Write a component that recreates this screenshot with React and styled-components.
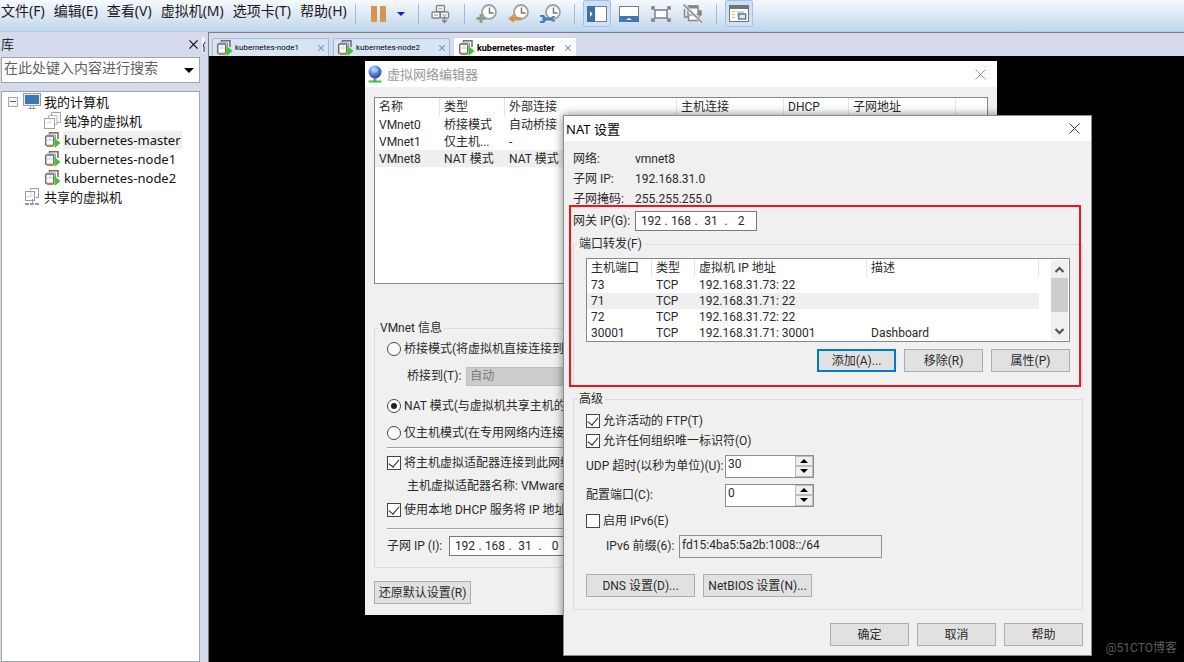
import React from "react";
import styled, { createGlobalStyle } from "styled-components";

const GlobalStyle = createGlobalStyle`
  * {
    box-sizing: border-box;
  }
  body {
    margin: 0;
    background: #d5dbed;
    color: #2a2a2a;
    font-family: Roboto, "Noto Sans CJK SC", sans-serif;
    font-size: 12px;
    line-height: 16px;
  }
  button,
  input,
  select {
    font: inherit;
    color: inherit;
    margin: 0;
  }
`;

// ---------- data ----------

const menus = ["文件(F)", "编辑(E)", "查看(V)", "虚拟机(M)", "选项卡(T)", "帮助(H)"];

const tabs = [
  { name: "kubernetes-node1", width: 117 },
  { name: "kubernetes-node2", width: 117 },
  { name: "kubernetes-master", width: 122, active: true },
];

const networks = [
  ["VMnet0", "桥接模式", "自动桥接"],
  ["VMnet1", "仅主机...", "-"],
  ["VMnet8", "NAT 模式", "NAT 模式"],
];

const forwards = [
  ["73", "TCP", "192.168.31.73: 22", ""],
  ["71", "TCP", "192.168.31.71: 22", ""],
  ["72", "TCP", "192.168.31.72: 22", ""],
  ["30001", "TCP", "192.168.31.71: 30001", "Dashboard"],
];

// ---------- icons ----------

// Stacked sheets for a stopped machine, darker cards with a play mark for a running one
const VmIcon = ({ running }) =>
  running ? (
    <svg width="17" height="17" viewBox="0 0 17 17" fill="none">
      <path d="M5.500 3V1.700h8.500V8" stroke="#6f6f6f" strokeWidth="1.500" />
      <path d="M3 4h8.500v4" stroke="#9a9a9a" />
      <rect x="1.700" y="5" width="8" height="9.500" rx="1" fill="#fff" stroke="#6f6f6f" strokeWidth="1.500" />
      <path d="M6 6v4M3 9h6" stroke="#bcd3ec" />
      <path d="M3 15h6.500" stroke="#b0894f" strokeWidth="2" />
      <path d="M10.500 7v10l6-5z" fill="#45c12f" />
    </svg>
  ) : (
    <svg width="17" height="17" viewBox="0 0 17 17" fill="none" stroke="#a3a3a3">
      <path d="M7.500 4V0.500h9v10h-4" />
      <path d="M4.500 6V3.500h8.500v9h-2" stroke="#b8b8b8" />
      <rect x="0.500" y="6.500" width="10" height="10" fill="#fff" />
      <path d="M6 7v4M2 10.500h6" stroke="#cfe0f2" />
    </svg>
  );

const SharedIcon = () => (
  <svg width="17" height="19" viewBox="0 0 17 19" fill="none" stroke="#9b9b9b">
    <path d="M6.500 3.500v-2h8v9h-3" />
    <rect x="1.500" y="4.500" width="9" height="9" fill="#fff" />
    <path d="M7 5v4h4M3 9.500h4" stroke="#c9dcf0" />
    <path d="M8.500 12v4" />
    <path d="M1 17h4M6 17h4M11 17h4" strokeWidth="2" />
  </svg>
);

const MonitorIcon = () => (
  <svg width="18" height="17" viewBox="0 0 18 17">
    <rect x="0.500" y="0.500" width="17" height="12" fill="#e9e9e9" stroke="#9c9c9c" />
    <rect x="2" y="2" width="14" height="9" fill="#3a78b4" />
    <path d="M7.500 13v2.500M10.500 13v2.500M5 15.500h8" stroke="#9c9c9c" />
  </svg>
);

const GlobeIcon = () => (
  <svg width="16" height="18" viewBox="0 0 16 18">
    <defs>
      <radialGradient id="globe" cx="0.4" cy="0.3" r="0.7">
        <stop offset="0" stopColor="#d6e6ff" />
        <stop offset="0.5" stopColor="#5a8ce0" />
        <stop offset="1" stopColor="#24459f" />
      </radialGradient>
    </defs>
    <circle cx="8" cy="7" r="6.500" fill="url(#globe)" />
    <path d="M6 2c2 0 2 2 4 2s1 3-1 3-3-2-3-5z" fill="#a8cdf5" opacity="0.7" />
    <path d="M6.500 13h3v3h-3z" fill="#8a8a8a" />
    <path d="M1.500 16.500h13" stroke="#3fbf3f" strokeWidth="2" />
  </svg>
);

const CrossIcon = ({ size = 11, color = "#333", weight = 1 }) => (
  <svg width={size} height={size} viewBox="0 0 11 11">
    <path d="M0.500 0.500l10 10M10.500 0.500l-10 10" stroke={color} strokeWidth={weight} />
  </svg>
);

const Arrow = ({ up, color = "#000", width = 8 }) => (
  <svg width={width} height={width / 2} viewBox="0 0 8 4">
    <path d={up ? "M0 4h8L4 0z" : "M0 0h8L4 4z"} fill={color} />
  </svg>
);

const Chevron = ({ up }) => (
  <svg width="9" height="7" viewBox="0 0 9 7">
    <path d={up ? "M0.500 6l4-4 4 4" : "M0.500 1l4 4 4-4"} fill="none" stroke="#505050" strokeWidth="2" />
  </svg>
);

// Edge of the next panel tab, peeking out beside the library close button
const PanelEdge = () => (
  <svg width="4" height="16" viewBox="0 0 4 16">
    <path d="M0 0h3v16H0z" fill="#f3f6fb" />
    <path d="M3 5L1 9h1v6" fill="none" stroke="#222" />
  </svg>
);

const PauseIcon = () => (
  <svg width="15" height="16" viewBox="0 0 15 16" fill="#d59450">
    <path d="M0 0h6v16H0zM9 0h6v16H9z" />
  </svg>
);

const SendKeysIcon = () => (
  <svg width="20" height="20" viewBox="0 0 20 20" fill="#fff" stroke="#858585" strokeWidth="1.400">
    <rect x="5.500" y="1.500" width="8" height="6" rx="1" />
    <rect x="1" y="8" width="8" height="6" rx="1" />
    <rect x="9.500" y="8" width="8" height="6" rx="1" />
    <path d="M7.500 4.500h4M3 11h4M11.500 11h4" stroke="#b5b5b5" />
    <path d="M13.500 12v6.500M11 16l2.500 2.500L16 16" fill="none" />
  </svg>
);

const Clock = ({ children }) => (
  <svg width="22" height="20" viewBox="0 0 22 20" fill="none">
    <circle cx="13" cy="8" r="7" fill="#fbfbfb" stroke="#a0a0a0" strokeWidth="1.800" />
    <path d="M13.500 3.500v5.500h4" stroke="#777" strokeWidth="1.400" />
    {children}
  </svg>
);

const SnapshotIcon = () => (
  <Clock>
    <path d="M5 10v9M0.500 14.500h9" stroke="#82a48f" strokeWidth="3" />
  </Clock>
);

const RevertIcon = () => (
  <Clock>
    <path d="M0 14.500L6 10v3h7v3.500H6V19z" fill="#d8924a" />
  </Clock>
);

// Wrench with an open jaw at each end
const ManageIcon = () => (
  <Clock>
    <path d="M0 11h4l2 2.500h5l1.500-1.500H15v1.500h-2v2.500h2v1.500h-2.500L11 16.500H6L4 19H0v-2h2.500v-4H0z" fill="#4a7fb5" />
  </Clock>
);

const LibraryIcon = () => (
  <svg width="20" height="16" viewBox="0 0 20 16">
    <rect x="0.500" y="0.500" width="19" height="15" fill="#fff" stroke="#7d7d7d" />
    <path d="M0 0h8v16H0z" fill="#3a73ab" />
    <path d="M3 5l2.500 3L3 11z" fill="#fff" />
  </svg>
);

const ThumbnailIcon = () => (
  <svg width="20" height="16" viewBox="0 0 20 16">
    <rect x="0.500" y="0.500" width="19" height="15" fill="#fff" stroke="#7d7d7d" />
    <path d="M0 10h20v6H0z" fill="#4079b0" />
    <path d="M7 14h6l-3-2z" fill="#fff" />
  </svg>
);

const FullScreenIcon = () => (
  <svg width="20" height="16" viewBox="0 0 20 16" fill="none" stroke="#808080" strokeWidth="1.500">
    <rect x="4" y="4" width="12" height="8" fill="#fff" />
    <path d="M1 4V1h3M16 1h3v3M19 12v3h-3M4 15H1v-3M1 1l3 3M19 1l-3 3M19 15l-3-3M1 15l3-3" />
  </svg>
);

const UnityIcon = () => (
  <svg width="20" height="19" viewBox="0 0 20 19" fill="none" stroke="#858585" strokeWidth="1.400">
    <path d="M1.500 5v8h4" />
    <rect x="5" y="2" width="10" height="9" fill="#fafafa" />
    <path d="M5 3h10" strokeWidth="3" />
    <path d="M15 7h3v4h-3" fill="#858585" />
    <path d="M5.500 12v4.500h10.500V11" fill="#fafafa" />
    <path d="M0.500 0.500L19 18.500" stroke="#eef3fa" strokeWidth="3" />
    <path d="M0.500 0.500L19 18.500" stroke="#8b8b96" strokeWidth="1.600" />
  </svg>
);

const ConsoleIcon = () => (
  <svg width="20" height="17" viewBox="0 0 20 17">
    <rect x="0.500" y="0.500" width="19" height="16" fill="#fff" stroke="#737373" />
    <path d="M0 0h20v4H0z" fill="#737373" />
    <path d="M3 6.500h3M3 9.500h3M3 12.500h3" stroke="#e6b96b" />
    <path d="M8 6h7v6H8z" fill="#c4d3e8" />
    <rect x="9.700" y="9" width="7" height="5" fill="#dbe7f5" stroke="#6b7480" strokeWidth="1.400" />
  </svg>
);

// ---------- shell ----------

const Page = styled.div`
  min-height: 100vh;
  display: flex;
  flex-direction: column;
`;

const Toolbar = styled.header`
  height: 32px;
  display: flex;
  align-items: flex-start;
  background: linear-gradient(180deg, #f5f9fd 0%, #dce8f5 50%, #c0d5ec 100%);
  border-bottom: 1px solid #b3cbe4;
`;

const Menu = styled.nav`
  width: 346px;
  flex: none;
  display: flex;
  gap: 9px;
  padding-left: 1px;
`;

const MenuButton = styled.button`
  border: 0;
  padding: 0;
  background: none;
  color: #1a1a1a;
  font-family: "Noto Sans", "Noto Sans CJK SC", sans-serif;
  font-size: 14px;
  line-height: 22px;
  white-space: nowrap;
`;

const Divider = styled.span`
  width: 1px;
  height: 20px;
  margin: 4px 8px 0 9px;
  background: #9dbbdc;
`;

const Tools = styled.div`
  display: flex;
  gap: 4px;
`;

const Tool = styled.button`
  width: ${(p) => (p.$narrow ? "17px" : "28px")};
  height: 27px;
  display: grid;
  place-items: center;
  padding: 0;
  border: 1px solid ${(p) => (p.$on ? "#a3c2e8" : "transparent")};
  border-radius: 2px;
  background: ${(p) => (p.$on ? "#cde0f7" : "none")};
`;

const Workspace = styled.div`
  flex: 1;
  display: flex;
`;

const Sidebar = styled.aside`
  width: 208px;
  flex: none;
  display: flex;
  flex-direction: column;
  padding: 0 8px 0 1px;
`;

const SidebarTitle = styled.div`
  height: 25px;
  display: flex;
  align-items: center;
  gap: 4px;
  margin-right: -6px;
  font-size: 13px;
`;

const SidebarName = styled.span`
  flex: 1;
`;

const IconButton = styled.button`
  display: grid;
  place-items: center;
  padding: 0;
  border: 0;
  background: none;
`;

const SearchBox = styled.div`
  height: 26px;
  display: flex;
  align-items: center;
  padding: 0 5px 0 2px;
  background: #fff;
  border: 1px solid #a0a4ad;
`;

const SearchInput = styled.input`
  flex: 1;
  min-width: 0;
  height: 20px;
  padding: 0 0 5px;
  border: 0;
  outline: 0;
  background: none;
  font-size: 14px;
  &::placeholder {
    color: #5f5f5f;
  }
`;

const Tree = styled.ul`
  flex: 1;
  margin: 8px 0 0;
  padding: 0;
  list-style: none;
  background: #fff;
  border: 1px solid #a0a4ad;
  font-family: "Noto Sans", "Noto Sans CJK SC", sans-serif;
  font-size: 13px;
`;

const TreeItem = styled.li`
  height: 19px;
  display: flex;
  align-items: center;
  gap: 2px;
  padding-left: ${(p) => [6, 22, 42][p.$level]}px;
`;

const TreeLabel = styled.span`
  padding: 0 1px;
  line-height: 18px;
  color: #111;
  background: ${(p) => (p.$selected ? "#efefef" : "none")};
`;

const Expander = styled.button`
  width: 10px;
  height: 10px;
  display: grid;
  place-items: center;
  padding: 0;
  margin-right: 3px;
  border: 1px solid #a6a6a6;
  background: #f7f7f7;
  &::after {
    content: "";
    width: 6px;
    height: 1px;
    background: #4a62a8;
  }
`;

const Main = styled.main`
  flex: 1;
  min-width: 0;
  display: flex;
  flex-direction: column;
  border-left: 1px solid #7d7d85;
`;

const TabStrip = styled.div`
  height: 24px;
  display: flex;
  align-items: flex-end;
  gap: 4px;
  padding-left: 3px;
  border-top: 1px solid #7d7d85;
`;

const Tab = styled.div`
  width: ${(p) => p.$width}px;
  height: 18px;
  display: flex;
  align-items: center;
  gap: 2px;
  padding: 0 4px 0 3px;
  border: 1px solid ${(p) => (p.$active ? "#fff" : "#a3bcd8")};
  border-bottom: 0;
  border-radius: 2px 2px 0 0;
  background: ${(p) => (p.$active ? "#fff" : "#d7e4f3")};
  color: #000;
  font-size: ${(p) => (p.$active ? "9px" : "8px")};
  font-weight: ${(p) => (p.$active ? "bold" : "normal")};
`;

const TabName = styled.span`
  flex: 1;
  white-space: nowrap;
`;

const Desktop = styled.div`
  flex: 1;
  position: relative;
  overflow: hidden;
  min-height: 606px;
  background: #000;
`;

const Watermark = styled.span`
  position: absolute;
  right: 7px;
  bottom: 6px;
  color: #5c5c5c;
`;

// ---------- dialogs ----------

const Dialog = styled.section`
  position: absolute;
  left: ${(p) => p.$x}px;
  top: ${(p) => p.$y}px;
  width: ${(p) => p.$width}px;
  background: #f0f0f0;
  border: ${(p) => (p.$front ? "1px solid #8c8c8c" : "0")};
  box-shadow: ${(p) => (p.$front ? "0 0 9px rgba(0, 0, 0, 0.5)" : "none")};
`;

const TitleBar = styled.div`
  height: ${(p) => (p.$muted ? "26px" : "25px")};
  display: flex;
  align-items: center;
  gap: 4px;
  padding: 0 11px 0 2px;
  background: #fff;
  color: ${(p) => (p.$muted ? "#999" : "#000")};
  font-family: "Noto Sans", "Noto Sans CJK SC", sans-serif;
  font-size: 13px;
`;

const TitleText = styled.h2`
  flex: 1;
  margin: 0;
  font-size: inherit;
  font-weight: normal;
`;

const Body = styled.div`
  padding: ${(p) => p.$pad};
`;

const ListBox = styled.div`
  height: ${(p) => p.$height}px;
  display: flex;
  justify-content: space-between;
  overflow: hidden;
  background: #fff;
  border: 1px solid #828790;
`;

const Table = styled.table`
  width: ${(p) => p.$width};
  align-self: flex-start;
  table-layout: fixed;
  border-collapse: separate;
  border-spacing: 0;
  th,
  td {
    height: ${(p) => (p.$dense ? "16px" : "17px")};
    padding: 0 0 0 4px;
    font-weight: normal;
    text-align: left;
    white-space: nowrap;
    line-height: 16px;
  }
  th {
    height: 18px;
    border-right: 1px solid #e5e5e5;
  }
  th:last-child {
    border-right: ${(p) => (p.$dense ? "1px solid #e5e5e5" : "0")};
  }
`;

const Row = styled.tr`
  background: ${(p) => (p.$selected ? "#efefef" : "none")};
`;

const Group = styled.fieldset`
  min-width: 0;
  margin: ${(p) => p.$top}px 0 0;
  padding: 0 12px ${(p) => p.$bottom}px;
  border: 1px solid #dcdcdc;
`;

const Legend = styled.legend`
  margin-left: -9px;
  padding: 0 2px;
  line-height: 16px;
`;

const Line = styled.div`
  height: ${(p) => p.$height}px;
  display: flex;
  align-items: center;
  padding-left: ${(p) => (p.$indent ? "20px" : "0")};
  white-space: nowrap;
`;

const Rule = styled.hr`
  height: 2px;
  margin: 3px 0 0;
  border: 0;
  border-top: 1px solid #a0a0a0;
  background: #fff;
`;

const Choice = styled.label`
  display: flex;
  align-items: center;
  gap: 3px;
`;

const Radio = styled.input.attrs({ type: "radio" })`
  appearance: none;
  width: 14px;
  height: 14px;
  display: grid;
  place-items: center;
  border: 1px solid #444;
  border-radius: 50%;
  background: #fff;
  &:checked::after {
    content: "";
    width: 6px;
    height: 6px;
    border-radius: 50%;
    background: #222;
  }
`;

const Check = styled.input.attrs({ type: "checkbox" })`
  appearance: none;
  width: 14px;
  height: 14px;
  display: grid;
  justify-items: center;
  align-items: start;
  border: 1px solid #444;
  background: #fff;
  &:checked::after {
    content: "";
    width: 5px;
    height: 9px;
    border: solid #222;
    border-width: 0 1px 1px 0;
    transform: rotate(40deg);
  }
`;

const Label = styled.label`
  width: ${(p) => (p.$width ? `${p.$width}px` : "auto")};
  flex: none;
`;

const BridgeSelect = styled.select`
  appearance: none;
  flex: 1;
  height: 19px;
  margin-left: 5px;
  padding: 0 3px;
  border: 1px solid #bfbfbf;
  border-radius: 0;
  background: #ccc;
  opacity: 1;
  &:disabled {
    color: #7a7a7a;
  }
`;

const IpBox = styled.div`
  width: 122px;
  height: 20px;
  display: flex;
  align-items: center;
  padding: 0 2px;
  background: #fff;
  border: 1px solid #7a7a7a;
`;

const Octet = styled.input`
  width: 26px;
  height: 16px;
  padding: 0;
  border: 0;
  outline: 0;
  background: none;
  text-align: center;
`;

const Dot = styled.span`
  width: 4px;
  text-align: center;
`;

const TextBox = styled.input`
  width: 203px;
  height: 23px;
  padding: 0 2px 3px;
  border: 1px solid #8e8e8e;
  border-radius: 0;
  outline: 0;
  background: #efefef;
`;

const SpinBox = styled.div`
  width: 89px;
  height: 23px;
  display: flex;
  background: #fff;
  border: 1px solid #8e8e8e;
`;

const SpinInput = styled.input`
  flex: 1;
  min-width: 0;
  padding: 0 2px 4px;
  border: 0;
  outline: 0;
`;

const SpinButtons = styled.div`
  width: 18px;
  display: grid;
  grid-template-rows: 1fr 1fr;
  button {
    display: grid;
    place-items: center;
    padding: 0;
    border: 1px solid #bcbcbc;
    background: #f0f0f0;
  }
`;

const Button = styled.button`
  width: ${(p) => p.$width || 79}px;
  height: 23px;
  padding: 0;
  border: ${(p) => (p.$focused ? "2px solid #0078d7" : "1px solid #adadad")};
  background: #e1e1e1;
  white-space: nowrap;
`;

const Buttons = styled.div`
  display: flex;
  justify-content: ${(p) => (p.$start ? "flex-start" : "flex-end")};
  gap: 8px;
  margin-top: ${(p) => p.$top}px;
`;

const ScrollBar = styled.div`
  width: 17px;
  display: flex;
  flex-direction: column;
  margin: 1px 1px 1px 0;
  background: #f0f0f0;
`;

const ScrollButton = styled(IconButton)`
  height: 18px;
`;

const Track = styled.div`
  flex: 1;
`;

const Thumb = styled.div`
  height: 34px;
  background: #cdcdcd;
`;

// Marks the port forwarding area on top of the dialog
const Highlight = styled.div`
  position: absolute;
  top: 89px;
  right: 10px;
  left: 5px;
  height: 182px;
  border: 2px solid #ee1418;
  pointer-events: none;
`;

function IpField({ id, value }) {
  return (
    <IpBox>
      {value.map((part, i) => (
        <React.Fragment key={i}>
          {i > 0 && <Dot>.</Dot>}
          <Octet id={i === 0 ? id : undefined} aria-label={`IP ${i + 1}`} defaultValue={part} />
        </React.Fragment>
      ))}
    </IpBox>
  );
}

function Spinner({ id, value }) {
  return (
    <SpinBox>
      <SpinInput id={id} defaultValue={value} />
      <SpinButtons>
        <button aria-label="增加">
          <Arrow up />
        </button>
        <button aria-label="减少">
          <Arrow />
        </button>
      </SpinButtons>
    </SpinBox>
  );
}

function NetworkEditor() {
  return (
    <Dialog $x={156} $y={5} $width={632}>
      <TitleBar $muted>
        <GlobeIcon />
        <TitleText>虚拟网络编辑器</TitleText>
        <IconButton aria-label="关闭">
          <CrossIcon color="#999" />
        </IconButton>
      </TitleBar>
      <Body $pad="10px 9px 11px">
        <ListBox $height={187}>
          <Table $width="100%">
            <colgroup>
              <col width="65" />
              <col width="65" />
              <col width="172" />
              <col width="107" />
              <col width="65" />
              <col width="107" />
              <col />
            </colgroup>
            <thead>
              <tr>
                <th>名称</th>
                <th>类型</th>
                <th>外部连接</th>
                <th>主机连接</th>
                <th>DHCP</th>
                <th>子网地址</th>
                <th />
              </tr>
            </thead>
            <tbody>
              {networks.map((cells) => (
                <Row key={cells[0]} $selected={cells[0] === "VMnet8"}>
                  {cells.map((cell, i) => (
                    <td key={i}>{cell}</td>
                  ))}
                  <td colSpan={4} />
                </Row>
              ))}
            </tbody>
          </Table>
        </ListBox>

        <Group $top={36} $bottom={5}>
          <Legend>VMnet 信息</Legend>
          <Line $height={26}>
            <Choice>
              <Radio name="mode" />
              桥接模式(将虚拟机直接连接到外
            </Choice>
          </Line>
          <Line $height={28} $indent>
            <Label htmlFor="bridge">桥接到(T):</Label>
            <BridgeSelect id="bridge" disabled>
              <option>自动</option>
            </BridgeSelect>
          </Line>
          <Line $height={32}>
            <Choice>
              <Radio name="mode" defaultChecked />
              NAT 模式(与虚拟机共享主机的
            </Choice>
          </Line>
          <Line $height={22}>
            <Choice>
              <Radio name="mode" />
              仅主机模式(在专用网络内连接虚
            </Choice>
          </Line>
          <Rule />
          <Line $height={28}>
            <Choice>
              <Check defaultChecked />
              将主机虚拟适配器连接到此网络
            </Choice>
          </Line>
          <Line $height={18} $indent>
            主机虚拟适配器名称: VMware
          </Line>
          <Line $height={30}>
            <Choice>
              <Check defaultChecked />
              使用本地 DHCP 服务将 IP 地址
            </Choice>
          </Line>
          <Rule />
          <Line $height={32}>
            <Label htmlFor="subnet" $width={62}>
              子网 IP (I):
            </Label>
            <IpField id="subnet" value={[192, 168, 31, 0]} />
          </Line>
        </Group>
        <Buttons $top={13} $start>
          <Button $width={97}>还原默认设置(R)</Button>
        </Buttons>
      </Body>
    </Dialog>
  );
}

function NatSettings() {
  return (
    <Dialog $x={354} $y={59} $width={529} $front>
      <TitleBar>
        <TitleText>NAT 设置</TitleText>
        <IconButton aria-label="关闭">
          <CrossIcon />
        </IconButton>
      </TitleBar>
      <Body $pad="8px 8px 9px 9px">
        <Line $height={20}>
          <Label as="span" $width={62}>网络:</Label>
          vmnet8
        </Line>
        <Line $height={20}>
          <Label as="span" $width={62}>子网 IP:</Label>
          192.168.31.0
        </Line>
        <Line $height={20}>
          <Label as="span" $width={62}>子网掩码:</Label>
          255.255.255.0
        </Line>
        <Line $height={24}>
          <Label htmlFor="gateway" $width={62}>
            网关 IP(G):
          </Label>
          <IpField id="gateway" value={[192, 168, 31, 2]} />
        </Line>

        <Group $top={3} $bottom={13}>
          <Legend>端口转发(F)</Legend>
          <Body $pad="6px 0 0">
            <ListBox $height={84}>
              <Table $width="452px" $dense>
                <colgroup>
                  <col width="65" />
                  <col width="43" />
                  <col width="172" />
                  <col width="172" />
                </colgroup>
                <thead>
                  <tr>
                    <th>主机端口</th>
                    <th>类型</th>
                    <th>虚拟机 IP 地址</th>
                    <th>描述</th>
                  </tr>
                </thead>
                <tbody>
                  {forwards.map((cells) => (
                    <Row key={cells[0]} $selected={cells[0] === "71"}>
                      {cells.map((cell, i) => (
                        <td key={i}>{cell}</td>
                      ))}
                    </Row>
                  ))}
                </tbody>
              </Table>
              <ScrollBar>
                <ScrollButton aria-label="向上">
                  <Chevron up />
                </ScrollButton>
                <Track>
                  <Thumb />
                </Track>
                <ScrollButton aria-label="向下">
                  <Chevron />
                </ScrollButton>
              </ScrollBar>
            </ListBox>
          </Body>
          <Buttons $top={7}>
            <Button $focused>添加(A)...</Button>
            <Button>移除(R)</Button>
            <Button>属性(P)</Button>
          </Buttons>
        </Group>

        <Group $top={5} $bottom={12}>
          <Legend>高级</Legend>
          <Body $pad="4px 0 0">
            <Line $height={20}>
              <Choice>
                <Check defaultChecked />
                允许活动的 FTP(T)
              </Choice>
            </Line>
            <Line $height={20}>
              <Choice>
                <Check defaultChecked />
                允许任何组织唯一标识符(O)
              </Choice>
            </Line>
            <Line $height={30}>
              <Label htmlFor="udp" $width={139}>
                UDP 超时(以秒为单位)(U):
              </Label>
              <Spinner id="udp" value="30" />
            </Line>
            <Line $height={28}>
              <Label htmlFor="port" $width={139}>
                配置端口(C):
              </Label>
              <Spinner id="port" value="0" />
            </Line>
            <Line $height={24}>
              <Choice>
                <Check />
                启用 IPv6(E)
              </Choice>
            </Line>
            <Line $height={26} $indent>
              <Label htmlFor="prefix" $width={73}>
                IPv6 前缀(6):
              </Label>
              <TextBox id="prefix" readOnly defaultValue="fd15:4ba5:5a2b:1008::/64" />
            </Line>
          </Body>
          <Buttons $top={15} $start>
            <Button $width={109}>DNS 设置(D)...</Button>
            <Button $width={109}>NetBIOS 设置(N)...</Button>
          </Buttons>
        </Group>
        <Buttons $top={13}>
          <Button>确定</Button>
          <Button>取消</Button>
          <Button>帮助</Button>
        </Buttons>
      </Body>
      <Highlight />
    </Dialog>
  );
}

export default function App() {
  return (
    <Page>
      <GlobalStyle />
      <Toolbar>
        <Menu>
          {menus.map((name) => (
            <MenuButton key={name}>{name}</MenuButton>
          ))}
        </Menu>
        <Divider />
        <Tool aria-label="暂停"><PauseIcon /></Tool>
        <Tool aria-label="电源选项" $narrow><Arrow color="#0a1fd0" /></Tool>
        <Divider />
        <Tool aria-label="发送按键"><SendKeysIcon /></Tool>
        <Divider />
        <Tools>
          <Tool aria-label="拍摄快照"><SnapshotIcon /></Tool>
          <Tool aria-label="恢复快照"><RevertIcon /></Tool>
          <Tool aria-label="管理快照"><ManageIcon /></Tool>
        </Tools>
        <Divider />
        <Tools>
          <Tool aria-label="显示库" $on><LibraryIcon /></Tool>
          <Tool aria-label="缩略图栏"><ThumbnailIcon /></Tool>
          <Tool aria-label="全屏"><FullScreenIcon /></Tool>
          <Tool aria-label="Unity"><UnityIcon /></Tool>
        </Tools>
        <Divider />
        <Tool aria-label="控制台视图" $on><ConsoleIcon /></Tool>
      </Toolbar>

      <Workspace>
        <Sidebar>
          <SidebarTitle>
            <SidebarName>库</SidebarName>
            <IconButton aria-label="关闭库">
              <CrossIcon size={9} color="#111" weight={1.5} />
            </IconButton>
            <PanelEdge />
          </SidebarTitle>
          <SearchBox>
            <SearchInput aria-label="搜索" placeholder="在此处键入内容进行搜索" />
            <IconButton aria-label="搜索选项">
              <Arrow width={10} />
            </IconButton>
          </SearchBox>
          <Tree>
            <TreeItem $level={0}>
              <Expander aria-label="折叠" />
              <MonitorIcon />
              <TreeLabel>我的计算机</TreeLabel>
            </TreeItem>
            <TreeItem $level={2}>
              <VmIcon />
              <TreeLabel>纯净的虚拟机</TreeLabel>
            </TreeItem>
            {["kubernetes-master", "kubernetes-node1", "kubernetes-node2"].map((name) => (
              <TreeItem key={name} $level={2}>
                <VmIcon running />
                <TreeLabel $selected={name === "kubernetes-master"}>{name}</TreeLabel>
              </TreeItem>
            ))}
            <TreeItem $level={1}>
              <SharedIcon />
              <TreeLabel>共享的虚拟机</TreeLabel>
            </TreeItem>
          </Tree>
        </Sidebar>

        <Main>
          <TabStrip>
            {tabs.map((tab) => (
              <Tab key={tab.name} $width={tab.width} $active={tab.active}>
                <VmIcon running />
                <TabName>{tab.name}</TabName>
                <IconButton aria-label="关闭标签">
                  <CrossIcon size={6} color="#6d9cc7" weight={2} />
                </IconButton>
              </Tab>
            ))}
          </TabStrip>
          <Desktop>
            <NetworkEditor />
            <NatSettings />
            <Watermark>@51CTO博客</Watermark>
          </Desktop>
        </Main>
      </Workspace>
    </Page>
  );
}
